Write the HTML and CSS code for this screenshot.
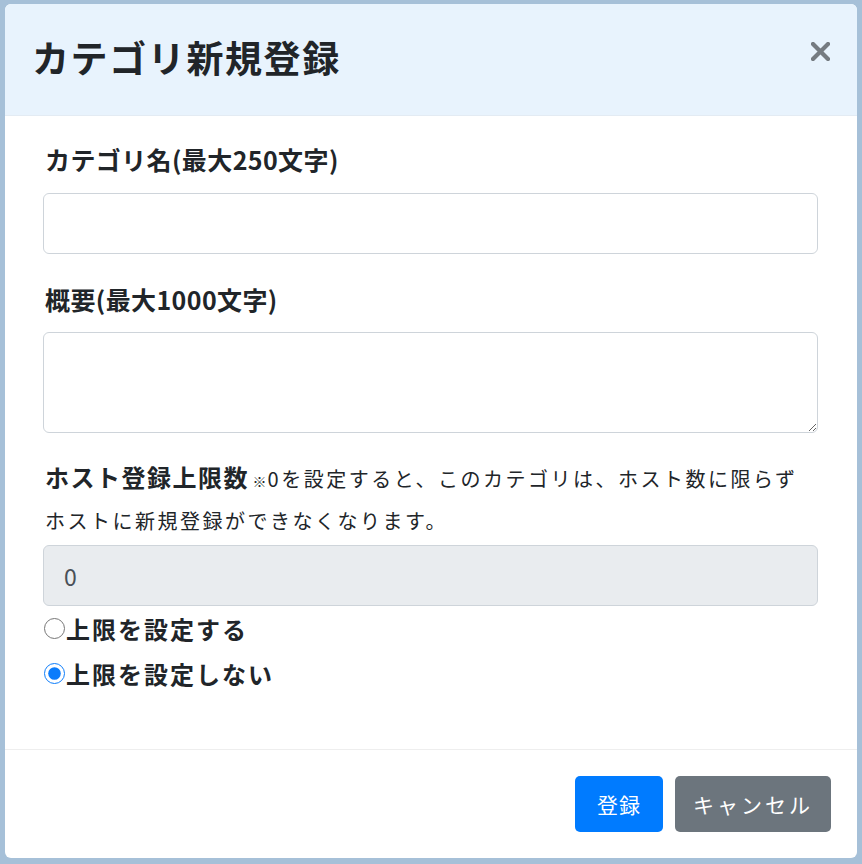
FILE: index.html
```html
<!DOCTYPE html>
<html lang="ja">
<head>
<meta charset="utf-8">
<title>カテゴリ新規登録</title>
<link rel="stylesheet" href="styles.css">
</head>
<body>
<div class="modal">
  <div class="modal-header">
    <h5 class="modal-title">カテゴリ新規登録</h5>
    <button class="close" type="button" aria-label="Close">
      <svg width="19" height="19" viewBox="0 0 19 19"><path d="M2 2 L17 17 M17 2 L2 17" stroke="#757b81" stroke-width="4.2" stroke-linecap="square" fill="none"/></svg>
    </button>
  </div>
  <div class="modal-body">
    <label class="label label-1">カテゴリ名(最大250文字)</label>
    <input class="form-control" type="text">
    <label class="label label-2">概要(最大1000文字)</label>
    <textarea class="form-control textarea"></textarea>
    <div class="limit-desc"><span class="limit-label">ホスト登録上限数</span> <span class="note"><span class="kome">※</span>0を設定すると、このカテゴリは、ホスト数に限らず<br>ホストに新規登録ができなくなります。</span></div>
    <input class="form-control disabled" type="text" value="0" disabled>
    <label class="radio-row"><input type="radio" name="limit"><span>上限を設定する</span></label>
    <label class="radio-row"><input type="radio" name="limit" checked><span>上限を設定しない</span></label>
  </div>
  <div class="modal-footer">
    <button class="btn btn-primary" type="button">登録</button>
    <button class="btn btn-secondary" type="button">キャンセル</button>
  </div>
</div>
</body>
</html>
```
FILE: styles.css
```css
html, body {
  margin: 0;
  padding: 0;
}
body {
  background: #a6c0d8;
  font-family: "Noto Sans CJK JP", "Noto Sans", sans-serif;
  color: #212529;
}
.modal {
  margin: 4px 5px;
  width: 852px;
  height: 854px;
  background: #fff;
  border-radius: 6px;
  overflow: hidden;
  display: flex;
  flex-direction: column;
}
.modal-header {
  height: 112px;
  box-sizing: border-box;
  background: #e8f3fd;
  border-bottom: 1px solid #e3ebf3;
  display: flex;
  align-items: center;
  justify-content: space-between;
  padding: 0 27px 0 27px;
}
.modal-title {
  margin: 0;
  font-size: 37px;
  font-weight: 700;
  letter-spacing: 1.6px;
  line-height: 1;
  padding-bottom: 4px;
}
.close {
  background: none;
  border: 0;
  padding: 0;
  width: 19px;
  height: 19px;
  margin-top: -16px;
  display: flex;
}
.modal-body {
  padding: 25px 39px 0 38px;
  display: flex;
  flex-direction: column;
  height: 634px;
  box-sizing: border-box;
  border-bottom: 1px solid #eeeeee;
}
.label {
  display: block;
  font-size: 25px;
  font-weight: 700;
  line-height: 36px;
  letter-spacing: 0.4px;
  padding-left: 2px;
}
.label-1 {
  margin-bottom: 16px;
}
.label-2 {
  margin-top: 27px;
  margin-bottom: 15px;
}
.form-control {
  display: block;
  box-sizing: border-box;
  width: 775px;
  height: 61px;
  margin: 0;
  border: 1px solid #ced4da;
  border-radius: 6px;
  background: #fff;
  font-family: "Noto Sans CJK JP", "Noto Sans", sans-serif;
  font-size: 23px;
  color: #495057;
  padding: 0 20px;
}
.textarea {
  height: 101px;
  resize: vertical;
}
.disabled {
  background: #e9ecef;
  opacity: 1;
}
.limit-desc {
  margin-top: 24px;
  line-height: 40px;
  padding-left: 2px;
  margin-bottom: 3px;
}
.limit-label {
  font-size: 24px;
  font-weight: 700;
  letter-spacing: 1.5px;
}
.note {
  font-size: 20px;
  letter-spacing: 2.5px;
}
.kome {
  font-size: 14px;
  letter-spacing: 1px;
}
.radio-row {
  display: flex;
  align-items: center;
  height: 45px;
  font-size: 24px;
  font-weight: 700;
  letter-spacing: 2px;
}
.radio-row:first-of-type {
  margin-top: 5px;
}
.radio-row input {
  margin: 0 1px 0 1px;
  width: 21px;
  height: 21px;
  accent-color: #0b7cfb;
}
.modal-footer {
  flex: 1;
  display: flex;
  justify-content: flex-end;
  align-items: flex-start;
  padding: 26px 26px 0 0;
  gap: 12px;
}
.btn {
  height: 56px;
  border: 0;
  border-radius: 5px;
  color: #fff;
  font-family: "Noto Sans CJK JP", "Noto Sans", sans-serif;
  font-size: 21px;
  letter-spacing: 1px;
  padding: 0;
  white-space: nowrap;
}
.btn-primary {
  background: #007bff;
  width: 88px;
}
.btn-secondary {
  background: #6c757d;
  width: 156px;
  letter-spacing: 3px;
}
```
